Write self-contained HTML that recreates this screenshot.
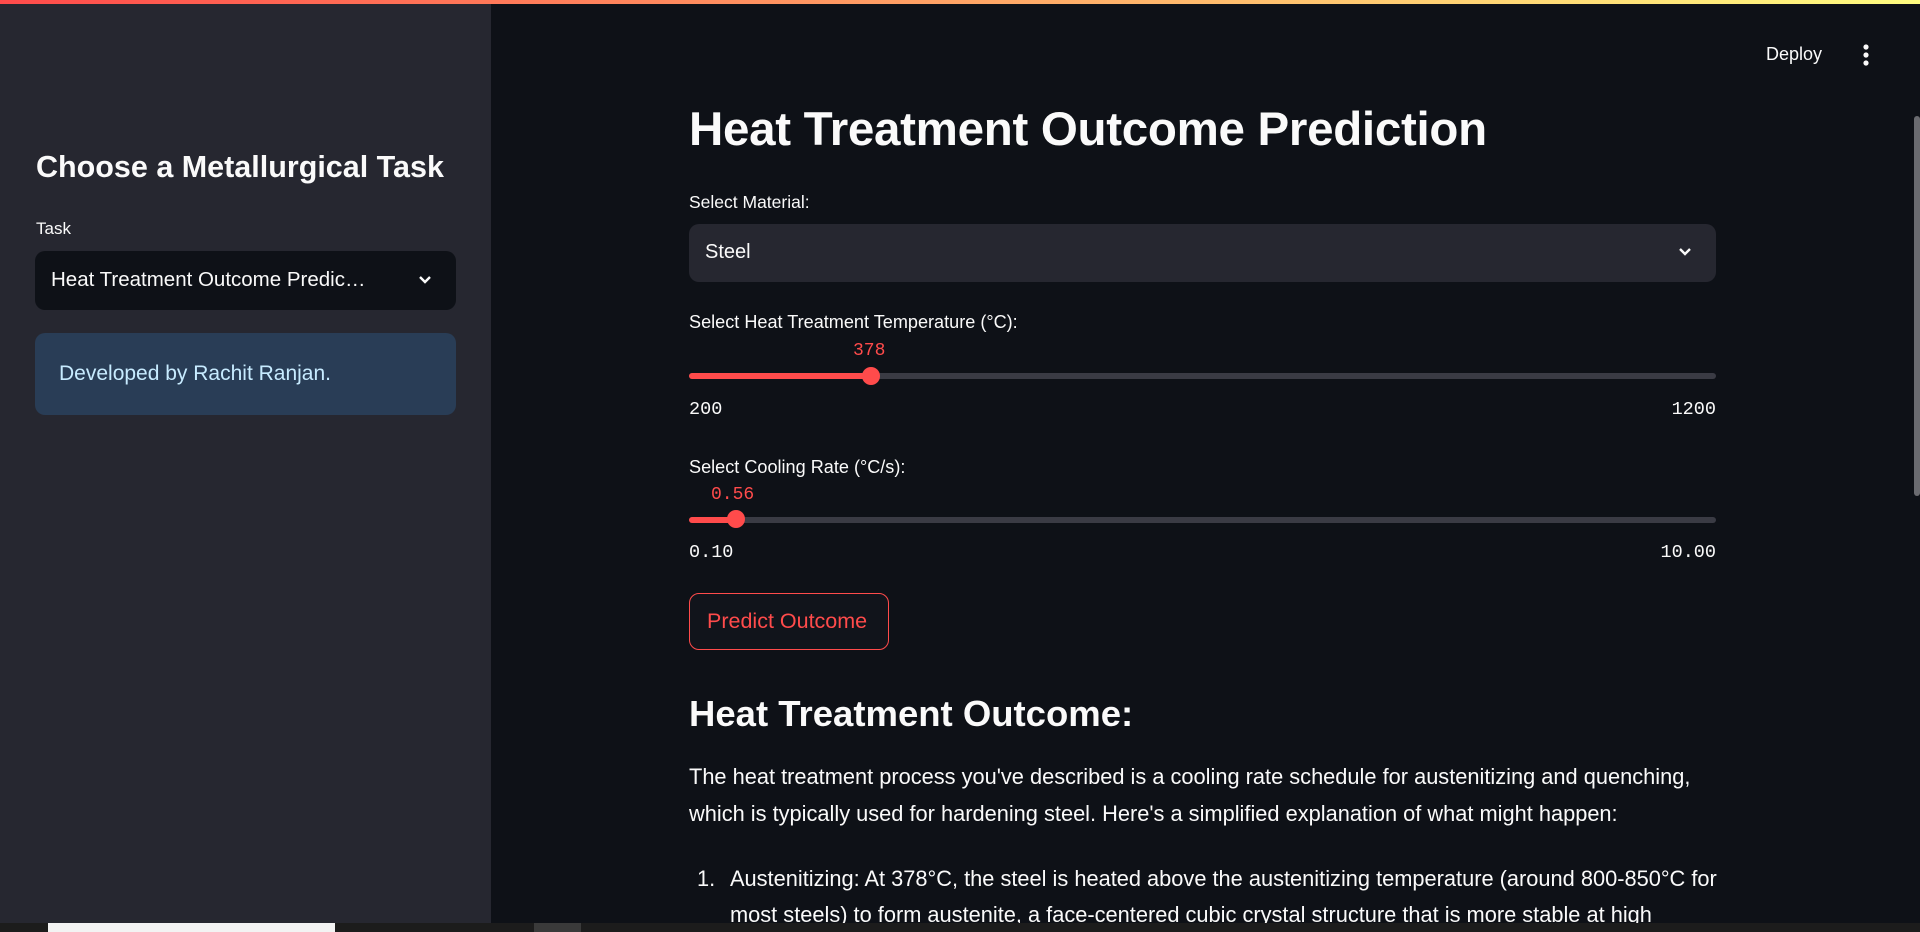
<!DOCTYPE html>
<html><head><meta charset="utf-8"><style>
*{margin:0;padding:0;box-sizing:border-box}
body{width:1920px;height:932px;overflow:hidden;background:#0e1117;font-family:"Liberation Sans",sans-serif;color:#fafafa;position:relative}
.a{position:absolute;white-space:nowrap}
.mono{font-family:"Liberation Mono",monospace}
</style></head><body>
<div class="a" style="left:0;top:0;width:1920px;height:4px;background:linear-gradient(90deg,#ff4b4b,#fffd80)"></div>
<div class="a" style="left:0;top:4px;width:491px;height:919px;background:#262730"></div>
<div class="a" style="left:36px;top:150px;font-size:30.5px;font-weight:bold">Choose a Metallurgical Task</div>
<div class="a" style="left:36px;top:219px;font-size:17px">Task</div>
<div class="a" style="left:35px;top:251px;width:421px;height:59px;background:#0e1117;border-radius:10px"></div>
<div class="a" style="left:51px;top:268px;font-size:20.5px">Heat Treatment Outcome Predic…</div>
<svg class="a" style="left:417px;top:273px" width="16" height="14" viewBox="0 0 16 14"><path d="M3 4l5 5 5-5" stroke="#fafafa" stroke-width="2.4" fill="none"/></svg>
<div class="a" style="left:35px;top:333px;width:421px;height:82px;background:#293d56;border-radius:10px"></div>
<div class="a" style="left:59px;top:362px;font-size:21px;color:#c7ebff">Developed by Rachit Ranjan.</div>

<div class="a" style="left:1766px;top:44px;font-size:18px">Deploy</div>
<svg class="a" style="left:1860px;top:42px" width="12" height="26"><circle cx="6" cy="5" r="2.6" fill="#fafafa"/><circle cx="6" cy="13" r="2.6" fill="#fafafa"/><circle cx="6" cy="21" r="2.6" fill="#fafafa"/></svg>
<div class="a" style="left:1914px;top:116px;width:6px;height:380px;background:#6a6b70;border-radius:3px"></div>

<div class="a" style="left:689px;top:102px;font-size:47.5px;font-weight:bold;letter-spacing:-0.3px">Heat Treatment Outcome Prediction</div>
<div class="a" style="left:689px;top:192px;font-size:17.5px">Select Material:</div>
<div class="a" style="left:689px;top:224px;width:1027px;height:58px;background:#262730;border-radius:10px"></div>
<div class="a" style="left:705px;top:241px;font-size:20px">Steel</div>
<svg class="a" style="left:1677px;top:245px" width="16" height="14" viewBox="0 0 16 14"><path d="M3 4l5 5 5-5" stroke="#fafafa" stroke-width="2.4" fill="none"/></svg>

<div class="a" style="left:689px;top:312px;font-size:18.1px">Select Heat Treatment Temperature (°C):</div>
<div class="a mono" style="left:853px;top:341px;font-size:18px;color:#ff4b4b">378</div>
<div class="a" style="left:689px;top:373px;width:1027px;height:6px;background:#3a3b44;border-radius:3px"></div>
<div class="a" style="left:689px;top:373px;width:182px;height:6px;background:#ff4b4b;border-radius:3px"></div>
<div class="a" style="left:862px;top:367px;width:18px;height:18px;background:#ff4b4b;border-radius:50%"></div>
<div class="a mono" style="left:689px;top:399px;font-size:18.5px">200</div>
<div class="a mono" style="left:1716px;top:399px;font-size:18.5px;transform:translateX(-100%)">1200</div>

<div class="a" style="left:689px;top:457px;font-size:18.1px">Select Cooling Rate (°C/s):</div>
<div class="a mono" style="left:711px;top:485px;font-size:18px;color:#ff4b4b">0.56</div>
<div class="a" style="left:689px;top:517px;width:1027px;height:6px;background:#3a3b44;border-radius:3px"></div>
<div class="a" style="left:689px;top:517px;width:47px;height:6px;background:#ff4b4b;border-radius:3px"></div>
<div class="a" style="left:727px;top:510px;width:18px;height:18px;background:#ff4b4b;border-radius:50%"></div>
<div class="a mono" style="left:689px;top:542px;font-size:18.5px">0.10</div>
<div class="a mono" style="left:1716px;top:542px;font-size:18.5px;transform:translateX(-100%)">10.00</div>

<div class="a" style="left:689px;top:593px;width:200px;height:57px;border:1.5px solid #ff4b4b;border-radius:10px;background:#11141b"></div>
<div class="a" style="left:707px;top:609px;font-size:21.5px;color:#ff4b4b">Predict Outcome</div>

<div class="a" style="left:689px;top:693px;font-size:36.5px;font-weight:bold">Heat Treatment Outcome:</div>
<div class="a" style="left:689px;top:764px;font-size:21.8px">The heat treatment process you've described is a cooling rate schedule for austenitizing and quenching,</div>
<div class="a" style="left:689px;top:801px;font-size:21.8px">which is typically used for hardening steel. Here's a simplified explanation of what might happen:</div>
<div class="a" style="left:697px;top:866px;font-size:21.8px">1.</div>
<div class="a" style="left:730px;top:866px;font-size:21.8px">Austenitizing: At 378°C, the steel is heated above the austenitizing temperature (around 800-850°C for</div>
<div class="a" style="left:730px;top:902px;font-size:21.8px">most steels) to form austenite, a face-centered cubic crystal structure that is more stable at high</div>

<div class="a" style="left:0;top:923px;width:1920px;height:9px;background:#1c1c1c"></div>
<div class="a" style="left:48px;top:923px;width:287px;height:9px;background:#f3f3f3"></div>
<div class="a" style="left:534px;top:923px;width:47px;height:9px;background:#3a3a3a"></div>
</body></html>
